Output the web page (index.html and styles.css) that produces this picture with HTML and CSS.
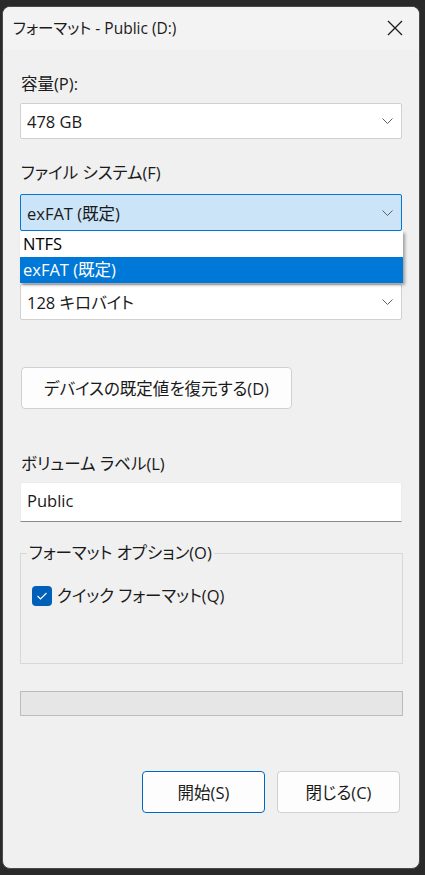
FILE: index.html
```html
<!DOCTYPE html>
<html lang="ja">
<head>
<meta charset="utf-8">
<title>フォーマット - Public (D:)</title>
<link rel="stylesheet" href="styles.css">
</head>
<body>
<div class="dialog">
  <div class="titlebar">
    <span class="title">フォーマット - Public (D:)</span>
    <svg class="close" width="16" height="16" viewBox="0 0 16 16"><path d="M1 1 L15 15 M15 1 L1 15" stroke="#1b1b1b" stroke-width="1.3" fill="none"/></svg>
  </div>
  <div class="content">
    <div class="label first">容量(P):</div>
    <div class="combo"><span>478 GB</span><svg class="chev" width="11" height="6" viewBox="0 0 11 6"><path d="M0.5 0.5 L5.5 5.5 L10.5 0.5" stroke="#606060" stroke-width="1" fill="none"/></svg></div>

    <div class="label">ファイル システム(F)</div>
    <div class="combo-wrap">
      <div class="combo combo-focus"><span>exFAT (既定)</span><svg class="chev" width="11" height="6" viewBox="0 0 11 6"><path d="M0.5 0.5 L5.5 5.5 L10.5 0.5" stroke="#606060" stroke-width="1" fill="none"/></svg></div>
      <ul class="dropdown">
        <li class="item">NTFS</li>
        <li class="item item-sel">exFAT (既定)</li>
      </ul>
    </div>

    <div class="label label-hidden">アロケーション ユニット サイズ(A)</div>
    <div class="combo"><span>128 キロバイト</span><svg class="chev" width="11" height="6" viewBox="0 0 11 6"><path d="M0.5 0.5 L5.5 5.5 L10.5 0.5" stroke="#606060" stroke-width="1" fill="none"/></svg></div>

    <button class="btn restore">デバイスの既定値を復元する(D)</button>

    <div class="label label-vol">ボリューム ラベル(L)</div>
    <div class="textbox">Public</div>

    <fieldset class="group">
      <legend class="legend">フォーマット オプション(O)</legend>
      <div class="check">
        <span class="box"><svg width="12" height="10" viewBox="0 0 12 10"><path d="M1.5 5 L4.5 8 L10.5 2" stroke="#ffffff" stroke-width="1.1" fill="none"/></svg></span>
        <span class="check-text">クイック フォーマット(Q)</span>
      </div>
    </fieldset>

    <div class="progress"></div>

    <div class="actions">
      <button class="btn action primary">開始(S)</button>
      <button class="btn action">閉じる(C)</button>
    </div>
  </div>
</div>
</body>
</html>
```
FILE: styles.css
```css
html, body {
  margin: 0;
  padding: 0;
  background: #2a2a2a;
  height: 875px;
  overflow: hidden;
}

body {
  font-family: "Open Sans", "Noto Sans CJK JP", sans-serif;
  font-feature-settings: "palt";
  font-size: 16.5px;
  color: #1a1a1a;
}

.dialog {
  box-sizing: border-box;
  margin: 6px 0 0 2px;
  width: 418px;
  height: 863px;
  background: #f0f0f0;
  border: 1px solid #4a4a4a;
  border-radius: 8px;
  overflow: hidden;
}

.titlebar {
  height: 43px;
  background: #f3f3f3;
  display: flex;
  align-items: center;
  justify-content: space-between;
  padding: 0 16px 0 10px;
}

.title {
  font-size: 15.5px;
  line-height: 20px;
  margin-top: -1px;
}

.close {
  display: block;
  margin-top: -2px;
}

.content {
  padding: 0 16px 0 17px;
}

.label {
  height: 20px;
  line-height: 20px;
  margin-top: 24px;
  margin-left: 1px;
}

.label-hidden {
  visibility: hidden;
}

.combo {
  box-sizing: border-box;
  height: 36px;
  margin-top: 9px;
  width: 382px;
  background: #ffffff;
  border: 1px solid #d0d0d0;
  border-radius: 2px;
  display: flex;
  align-items: center;
  justify-content: space-between;
  padding: 0 8px 0 6px;
}

.chev {
  display: block;
}

.combo-wrap {
  position: relative;
  margin-top: 11px;
}

.combo-focus {
  margin-top: 0;
  height: 37px;
  background: #cce4f7;
  border-color: #0078d7;
}

.dropdown {
  position: absolute;
  top: 37px;
  left: 0;
  width: 383px;
  margin: 0;
  padding: 0;
  list-style: none;
  box-shadow: 2px 2px 3px rgba(0, 0, 0, 0.35);
  z-index: 2;
}

.item {
  box-sizing: border-box;
  height: 26px;
  line-height: 26px;
  padding-left: 3px;
  background: #ffffff;
  font-size: 16.5px;
  color: #000;
}

.item-sel {
  background: #0078d7;
  color: #ffffff;
}

.btn {
  box-sizing: border-box;
  display: block;
  font-family: inherit;
  font-size: 16.5px;
  font-feature-settings: "palt";
  color: #1a1a1a;
  background: #fdfdfd;
  border: 1px solid #d0d0d0;
  border-radius: 4px;
  padding: 0;
}

.restore {
  margin-top: 47px;
  margin-left: 1px;
  width: 271px;
  height: 42px;
}

.label-vol {
  margin-top: 45px;
}

.textbox {
  box-sizing: border-box;
  margin-top: 8px;
  width: 382px;
  height: 40px;
  background: #ffffff;
  border: 1px solid #ececec;
  border-bottom: 1px solid #8a8a8a;
  padding: 0 6px;
  line-height: 36px;
}

.group {
  margin: 21px 0 0 0;
  width: 383px;
  box-sizing: border-box;
  border: 1px solid #d8d8d8;
  padding: 23px 12px 57px 11px;
  min-inline-size: 0;
}

.legend {
  padding: 0 2px;
  margin-left: -5px;
  height: 20px;
  line-height: 20px;
}

.check {
  display: flex;
  align-items: center;
  height: 20px;
}

.box {
  width: 20px;
  height: 20px;
  box-sizing: border-box;
  border-radius: 4px;
  background: #005fb8;
  display: flex;
  align-items: center;
  justify-content: center;
}

.check-text {
  margin-left: 5px;
  line-height: 20px;
}

.progress {
  box-sizing: border-box;
  margin-top: 27px;
  width: 383px;
  height: 25px;
  background: #e6e6e6;
  border: 1px solid #bcbcbc;
}

.actions {
  display: flex;
  justify-content: flex-end;
  gap: 12px;
  margin-top: 55px;
  padding-right: 3px;
}

.action {
  width: 123px;
  height: 42px;
}

.primary {
  border-color: #0067c0;
}
```
